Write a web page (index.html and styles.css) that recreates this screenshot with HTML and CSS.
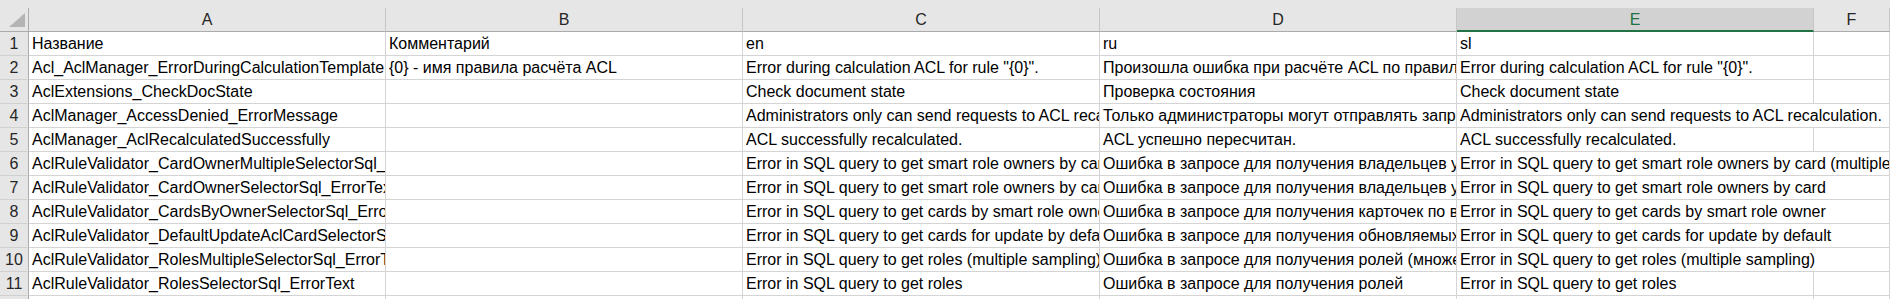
FILE: index.html
```html
<!DOCTYPE html>
<html lang="ru">
<head>
  <meta charset="UTF-8" />
  <title>Localization.xlsx</title>
  <link rel="stylesheet" href="styles.css">
</head>
<body>
  <div class="sheet">
    <div class="top-strip"></div>

    <div class="corner"><span class="corner-mark"></span></div>
    <div class="col-head">A</div>
    <div class="col-head">B</div>
    <div class="col-head">C</div>
    <div class="col-head">D</div>
    <div class="col-head active">E</div>
    <div class="col-head">F</div>

    <div class="row-head">1</div>
    <div class="cell">Название</div>
    <div class="cell">Комментарий</div>
    <div class="cell">en</div>
    <div class="cell">ru</div>
    <div class="cell">sl</div>
    <div class="cell"></div>

    <div class="row-head">2</div>
    <div class="cell">Acl_AclManager_ErrorDuringCalculationTemplate</div>
    <div class="cell">{0} - имя правила расчёта ACL</div>
    <div class="cell">Error during calculation ACL for rule "{0}".</div>
    <div class="cell">Произошла ошибка при расчёте ACL по правилу "{0}".</div>
    <div class="cell">Error during calculation ACL for rule "{0}".</div>
    <div class="cell"></div>

    <div class="row-head">3</div>
    <div class="cell">AclExtensions_CheckDocState</div>
    <div class="cell"></div>
    <div class="cell">Check document state</div>
    <div class="cell">Проверка состояния</div>
    <div class="cell">Check document state</div>
    <div class="cell"></div>

    <div class="row-head">4</div>
    <div class="cell">AclManager_AccessDenied_ErrorMessage</div>
    <div class="cell"></div>
    <div class="cell">Administrators only can send requests to ACL recalculation.</div>
    <div class="cell">Только администраторы могут отправлять запросы на пересчёт ACL.</div>
    <div class="cell overflow">Administrators only can send requests to ACL recalculation.</div>

    <div class="row-head">5</div>
    <div class="cell">AclManager_AclRecalculatedSuccessfully</div>
    <div class="cell"></div>
    <div class="cell">ACL successfully recalculated.</div>
    <div class="cell">ACL успешно пересчитан.</div>
    <div class="cell">ACL successfully recalculated.</div>
    <div class="cell"></div>

    <div class="row-head">6</div>
    <div class="cell">AclRuleValidator_CardOwnerMultipleSelectorSql_ErrorText</div>
    <div class="cell"></div>
    <div class="cell">Error in SQL query to get smart role owners by card (multiple sampling)</div>
    <div class="cell">Ошибка в запросе для получения владельцев умной роли по карточке (множественная выборка)</div>
    <div class="cell overflow">Error in SQL query to get smart role owners by card (multiple sampling)</div>

    <div class="row-head">7</div>
    <div class="cell">AclRuleValidator_CardOwnerSelectorSql_ErrorText</div>
    <div class="cell"></div>
    <div class="cell">Error in SQL query to get smart role owners by card</div>
    <div class="cell">Ошибка в запросе для получения владельцев умной роли по карточке</div>
    <div class="cell overflow">Error in SQL query to get smart role owners by card</div>

    <div class="row-head">8</div>
    <div class="cell">AclRuleValidator_CardsByOwnerSelectorSql_ErrorText</div>
    <div class="cell"></div>
    <div class="cell">Error in SQL query to get cards by smart role owner</div>
    <div class="cell">Ошибка в запросе для получения карточек по владельцу умной роли</div>
    <div class="cell overflow">Error in SQL query to get cards by smart role owner</div>

    <div class="row-head">9</div>
    <div class="cell">AclRuleValidator_DefaultUpdateAclCardSelectorSql_ErrorText</div>
    <div class="cell"></div>
    <div class="cell">Error in SQL query to get cards for update by default</div>
    <div class="cell">Ошибка в запросе для получения обновляемых карточек по умолчанию</div>
    <div class="cell overflow">Error in SQL query to get cards for update by default</div>

    <div class="row-head">10</div>
    <div class="cell">AclRuleValidator_RolesMultipleSelectorSql_ErrorText</div>
    <div class="cell"></div>
    <div class="cell">Error in SQL query to get roles (multiple sampling)</div>
    <div class="cell">Ошибка в запросе для получения ролей (множественная выборка)</div>
    <div class="cell overflow">Error in SQL query to get roles (multiple sampling)</div>

    <div class="row-head">11</div>
    <div class="cell">AclRuleValidator_RolesSelectorSql_ErrorText</div>
    <div class="cell"></div>
    <div class="cell">Error in SQL query to get roles</div>
    <div class="cell">Ошибка в запросе для получения ролей</div>
    <div class="cell">Error in SQL query to get roles</div>
    <div class="cell"></div>

    <div class="row-head">12</div>
    <div class="cell"></div>
    <div class="cell"></div>
    <div class="cell"></div>
    <div class="cell"></div>
    <div class="cell"></div>
    <div class="cell"></div>
  </div>
</body>
</html>
```

FILE: styles.css
```css
body {
  margin: 0;
  background: #fff;
  overflow: hidden;
  font-family: "Liberation Sans", Arial, sans-serif;
  font-size: 16px;
  color: #000;
}

/* whole sheet is one grid: row numbers + columns A..F */
.sheet {
  display: grid;
  grid-template-columns: 29px repeat(5, 357px) 76px;
  grid-template-rows: 8px 24px;
  grid-auto-rows: 24px;
  width: 1890px;
  height: 299px;
  overflow: hidden;
}

.top-strip {
  grid-column: 1 / -1;
  background: #e6e6e6;
}

.corner,
.col-head,
.row-head,
.cell {
  box-sizing: border-box;
  white-space: nowrap;
  overflow: hidden;
}

.corner {
  position: relative;
  background: #e6e6e6;
  border-right: 1px solid #ababab;
  border-bottom: 1px solid #ababab;
}

/* little triangle "select all" */
.corner-mark {
  position: absolute;
  right: 3px;
  bottom: 4px;
  width: 0;
  height: 0;
  border-left: 16px solid transparent;
  border-bottom: 14px solid #b4b4b4;
}

.col-head {
  background: #e6e6e6;
  border-right: 1px solid #c6c6c6;
  border-bottom: 1px solid #ababab;
  text-align: center;
  line-height: 23px;
  font-size: 16px;
  color: #262626;
}

.col-head.active {
  background: #d2d2d2;
  color: #217346;
  border-bottom: 2px solid #217346;
}

.row-head {
  background: #e6e6e6;
  border-right: 1px solid #ababab;
  border-bottom: 1px solid #d0d0d0;
  text-align: center;
  line-height: 24px;
  color: #262626;
}

.cell {
  border-right: 1px solid #d4d4d4;
  border-bottom: 1px solid #d4d4d4;
  padding: 0 0 0 3px;
  line-height: 24px;
}

/* text in E spills into the empty F cell */
.cell.overflow {
  grid-column: span 2;
}
```
